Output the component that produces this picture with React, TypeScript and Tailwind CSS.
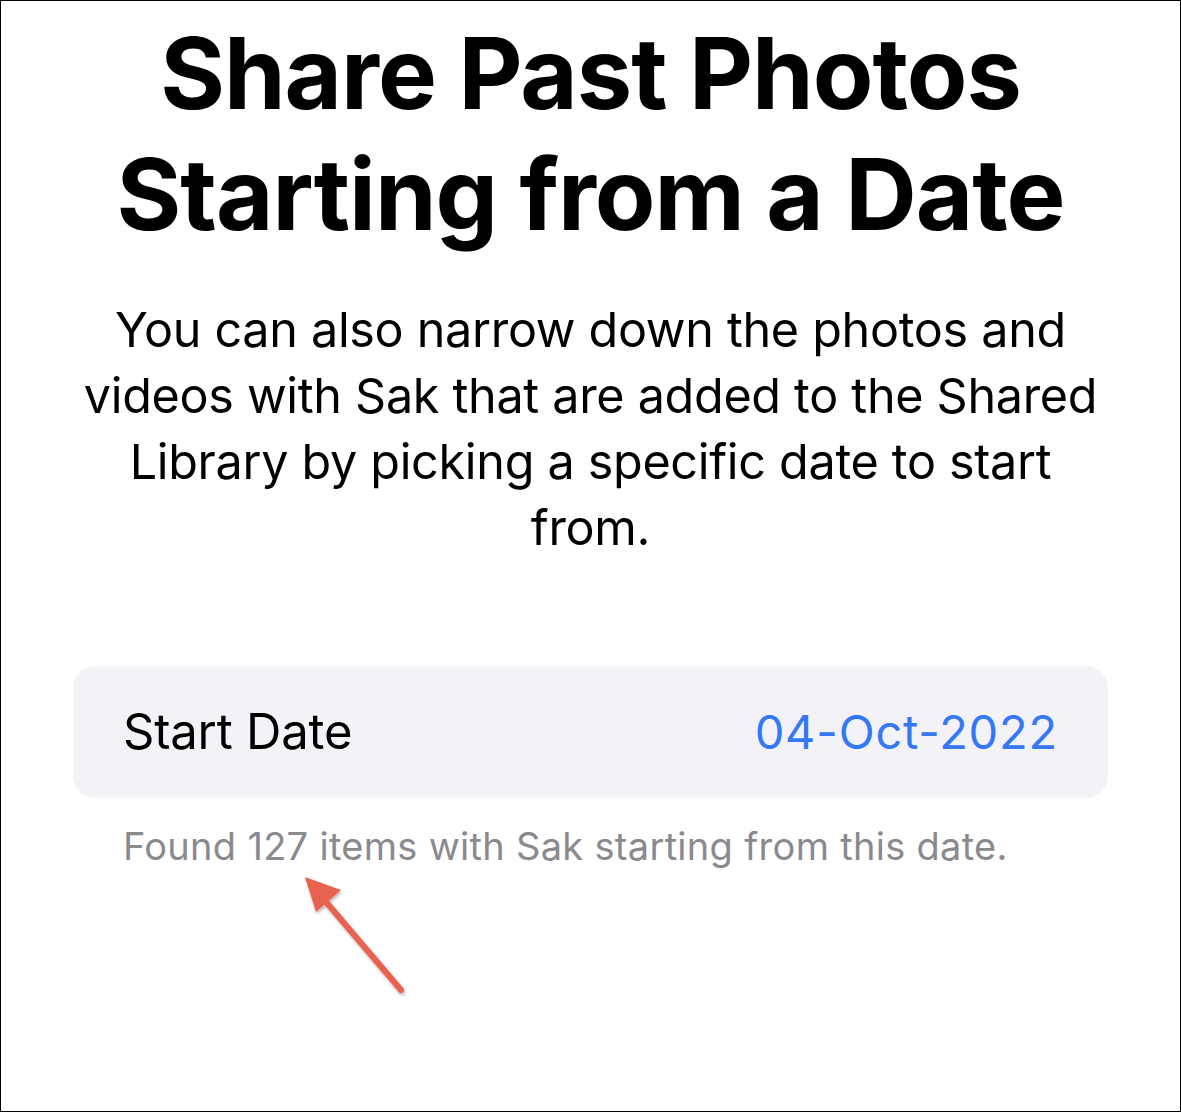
export default function App() {
  return (
    <div className="relative w-[1181px] h-[1112px] bg-white border border-black overflow-hidden font-['Inter','Noto_Sans',sans-serif] text-black">
      <div className="flex flex-col items-center">
        <h1 className="mt-[12px] text-center text-[99px] leading-[121px] font-bold tracking-[-1px]">
          Share Past Photos
          <br />
          Starting from a Date
        </h1>
        <p className="mt-[42px] w-[1030px] text-center text-[48.5px] leading-[66px] tracking-[-0.3px]">
          You can also narrow down the photos and videos with Sak that are added to the Shared Library by picking a specific date to start from.
        </p>
      </div>

      <div className="mx-[72px] mt-[105px] h-[132px] rounded-[22px] bg-[#f2f2f7] flex items-center justify-between pl-[50px] pr-[50px]">
        <span className="text-[49px] tracking-[-0.2px]">Start Date</span>
        <span className="text-[47px] tracking-[0.8px] text-[#3478f6]">04-Oct-2022</span>
      </div>

      <p className="mt-[20px] ml-[122px] text-[38px] tracking-[0.3px] text-[#8a8a8e]">
        Found 127 items with Sak starting from this date.
      </p>

      {/* annotation arrow */}
      <svg className="absolute left-[290px] top-[865px]" width="130" height="140" viewBox="0 0 130 140">
        <defs>
          <filter id="sh" x="-20%" y="-20%" width="140%" height="140%">
            <feDropShadow dx="1" dy="2" stdDeviation="1.5" floodColor="#000" floodOpacity="0.3" />
          </filter>
        </defs>
        <g filter="url(#sh)">
          <line x1="110" y1="124" x2="30" y2="30" stroke="#e8624f" strokeWidth="6" strokeLinecap="round" />
          <polygon points="14,11 50,24 25,46" fill="#e8624f" />
        </g>
      </svg>
    </div>
  )
}
